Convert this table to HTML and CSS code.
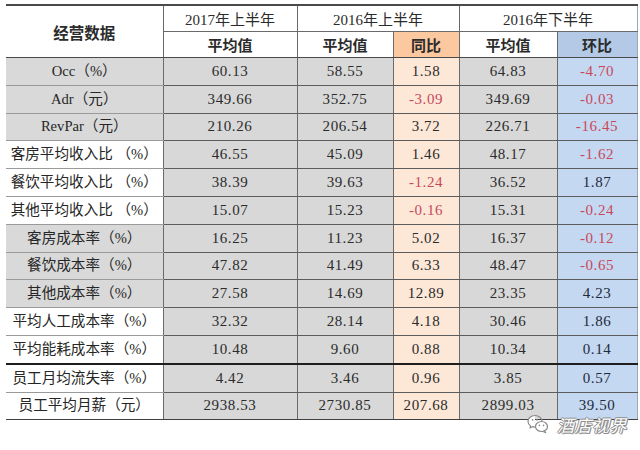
FILE: index.html
```html
<!DOCTYPE html>
<html lang="zh-CN">
<head>
<meta charset="utf-8">
<title>经营数据</title>
<link rel="stylesheet" href="styles.css">
</head>
<body>
<div class="wrap">
<table class="data">
  <colgroup>
    <col class="c1"><col class="c2"><col class="c3"><col class="c4"><col class="c5"><col class="c6">
  </colgroup>
  <thead>
    <tr class="h1">
      <th rowspan="2" class="lab-h">经营数据</th>
      <th>2017年上半年</th>
      <th colspan="2">2016年上半年</th>
      <th colspan="2">2016年下半年</th>
    </tr>
    <tr class="h2">
      <th class="b">平均值</th>
      <th class="b">平均值</th>
      <th class="b yoy-h">同比</th>
      <th class="b">平均值</th>
      <th class="b mom-h">环比</th>
    </tr>
  </thead>
  <tbody>
    <tr><td class="lab g">Occ（%）</td><td class="v">60.13</td><td class="v">58.55</td><td class="yoy">1.58</td><td class="v">64.83</td><td class="mom neg">-4.70</td></tr>
    <tr><td class="lab g">Adr（元）</td><td class="v">349.66</td><td class="v">352.75</td><td class="yoy neg">-3.09</td><td class="v">349.69</td><td class="mom neg">-0.03</td></tr>
    <tr><td class="lab g">RevPar（元）</td><td class="v">210.26</td><td class="v">206.54</td><td class="yoy">3.72</td><td class="v">226.71</td><td class="mom neg">-16.45</td></tr>
    <tr><td class="lab">客房平均收入比 （%）</td><td class="v">46.55</td><td class="v">45.09</td><td class="yoy">1.46</td><td class="v">48.17</td><td class="mom neg">-1.62</td></tr>
    <tr><td class="lab">餐饮平均收入比 （%）</td><td class="v">38.39</td><td class="v">39.63</td><td class="yoy neg">-1.24</td><td class="v">36.52</td><td class="mom">1.87</td></tr>
    <tr><td class="lab">其他平均收入比 （%）</td><td class="v">15.07</td><td class="v">15.23</td><td class="yoy neg">-0.16</td><td class="v">15.31</td><td class="mom neg">-0.24</td></tr>
    <tr><td class="lab g">客房成本率（%）</td><td class="v">16.25</td><td class="v">11.23</td><td class="yoy">5.02</td><td class="v">16.37</td><td class="mom neg">-0.12</td></tr>
    <tr><td class="lab g">餐饮成本率（%）</td><td class="v">47.82</td><td class="v">41.49</td><td class="yoy">6.33</td><td class="v">48.47</td><td class="mom neg">-0.65</td></tr>
    <tr><td class="lab g">其他成本率（%）</td><td class="v">27.58</td><td class="v">14.69</td><td class="yoy">12.89</td><td class="v">23.35</td><td class="mom">4.23</td></tr>
    <tr><td class="lab">平均人工成本率（%）</td><td class="v">32.32</td><td class="v">28.14</td><td class="yoy">4.18</td><td class="v">30.46</td><td class="mom">1.86</td></tr>
    <tr class="before-thick"><td class="lab">平均能耗成本率（%）</td><td class="v">10.48</td><td class="v">9.60</td><td class="yoy">0.88</td><td class="v">10.34</td><td class="mom">0.14</td></tr>
    <tr><td class="lab">员工月均流失率（%）</td><td class="v">4.42</td><td class="v">3.46</td><td class="yoy">0.96</td><td class="v">3.85</td><td class="mom">0.57</td></tr>
    <tr class="last"><td class="lab">员工平均月薪（元）</td><td class="v">2938.53</td><td class="v">2730.85</td><td class="yoy">207.68</td><td class="v">2899.03</td><td class="mom">39.50</td></tr>
  </tbody>
</table>
<div class="watermark">
  <svg class="wx" width="22" height="20" viewBox="0 0 22 20">
    <path d="M8 1.5C4 1.5 1 4.2 1 7.4c0 1.8 1 3.4 2.6 4.5L3 14l2.4-1.3c.8.2 1.7.4 2.6.4" fill="#fff" stroke="#8a8a8a" stroke-width="1.2" stroke-linejoin="round"/>
    <path d="M8 1.5c4 0 7 2.6 7 5.6" fill="none" stroke="#8a8a8a" stroke-width="1.2"/>
    <ellipse cx="14.5" cy="12.5" rx="6" ry="5" fill="#fff" stroke="#8a8a8a" stroke-width="1.2"/>
    <path d="M17.5 16.8l1.2 2-2.6-1.2" fill="#fff" stroke="#8a8a8a" stroke-width="1.1" stroke-linejoin="round"/>
    <circle cx="5.6" cy="5.8" r="0.9" fill="#8a8a8a"/>
    <circle cx="10" cy="5.8" r="0.9" fill="#8a8a8a"/>
    <circle cx="12.4" cy="11.4" r="0.8" fill="#8a8a8a"/>
    <circle cx="16.6" cy="11.4" r="0.8" fill="#8a8a8a"/>
  </svg>
  <span class="wm-text">酒店视界</span>
</div>
</div>
</body>
</html>
```
FILE: styles.css
```css
html, body {
  margin: 0;
  padding: 0;
  background: #ffffff;
}
body {
  font-family: "Liberation Serif", "Noto Sans CJK SC", serif;
  color: #2b2b2b;
}
.wrap {
  position: relative;
  padding: 4px 3px 0 6px;
  width: 640px;
  height: 450px;
  box-sizing: border-box;
}
.data {
  border-collapse: collapse;
  table-layout: fixed;
  width: 631px;
  border-top: 2px solid #4a4a4a;
}
.c1 { width: 157px; }
.c2 { width: 134px; }
.c3 { width: 96px; }
.c4 { width: 66px; }
.c5 { width: 98px; }
.c6 { width: 80px; }

th, td {
  padding: 0;
  text-align: center;
  vertical-align: middle;
  white-space: nowrap;
  overflow: hidden;
}
th {
  font-weight: normal;
  font-size: 15px;
  height: 25px;
  background: #ffffff;
  border-left: 1px solid #6a6a6a;
}
.h1 th {
  border-bottom: 1px solid #6a6a6a;
}
th.lab-h {
  border-left: none;
  font-weight: bold;
  font-size: 15.5px;
  border-bottom: 1.5px solid #4a4a4a;
}
.h2 th {
  border-bottom: 1.5px solid #4a4a4a;
}
th.b {
  font-weight: bold;
}
th.yoy-h { background: #fbc89f; }
th.mom-h { background: #b3c9e6; }

td {
  height: 26.8px;
  font-size: 15px;
  line-height: 15px;
  letter-spacing: 0.6px;
  border-bottom: 1px solid #5c5c5c;
  border-left: 1px solid #6a6a6a;
}
td.lab {
  font-size: 14.6px;
  letter-spacing: 0;
  border-left: none;
  border-bottom-color: #9a9a9a;
  background: #ffffff;
  color: #262626;
}
td.lab.g { background: #d9d9d9; }
td.v { background: #d8d8d8; }
td.yoy { background: #fde8d8; }
td.mom { background: #c4d8f1; color: #1f2a3a; }
td.neg { color: #c8485a; }
tr.before-thick td { border-bottom: 2px solid #1e1e1e; }
tr.last td { border-bottom: 1.5px solid #3f3f3f; }
td.mom, th.mom-h, th:last-child { border-right: 1px solid #9aa8bb; }

.watermark {
  position: absolute;
  left: 527px;
  top: 415px;
  display: flex;
  align-items: center;
  gap: 8px;
}
.wx { display: block; margin-top: -1px; }
.wm-text {
  font-family: "Noto Sans CJK SC", sans-serif;
  font-size: 17px;
  line-height: 17px;
  font-style: italic;
  color: #ffffff;
  letter-spacing: 0.5px;
  text-shadow: -1px 0 #8d8d8d, 1px 0 #8d8d8d, 0 -1px #8d8d8d, 0 1px #8d8d8d, 1px 1px #a0a0a0;
}
```
